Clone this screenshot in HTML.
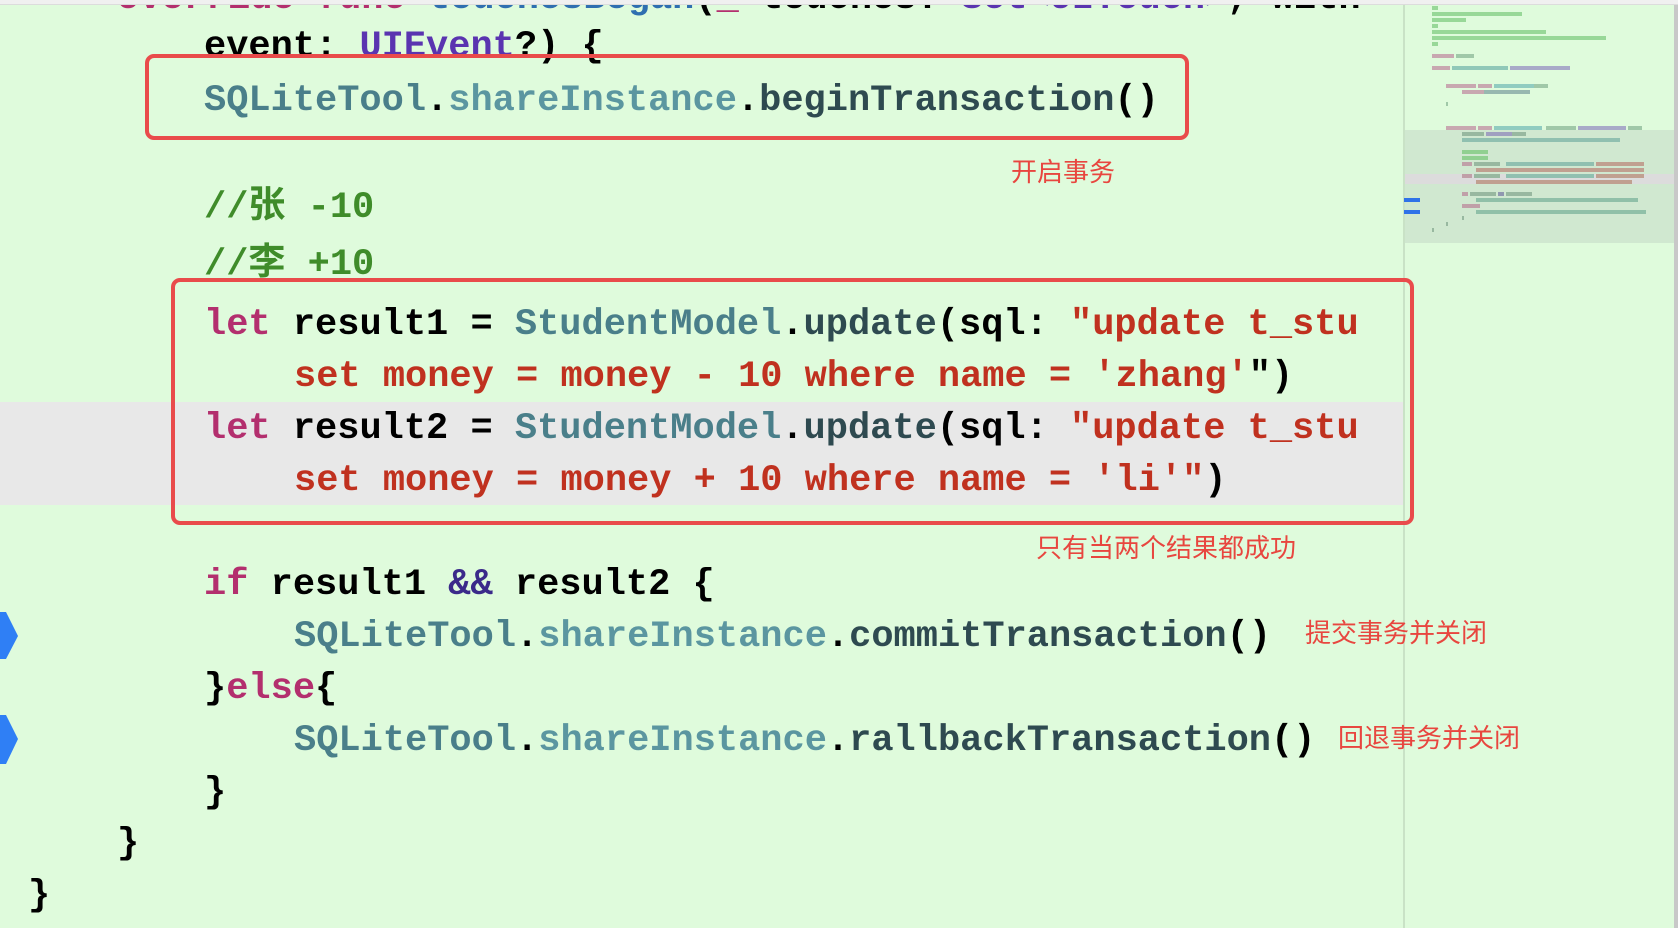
<!DOCTYPE html>
<html><head><meta charset="utf-8"><style>
*{margin:0;padding:0;box-sizing:border-box}
body{width:1678px;height:928px;overflow:hidden;background:#dffbdc;position:relative;font-family:"Liberation Mono","Noto Sans CJK SC",monospace;}
.l{position:absolute;height:52px;line-height:52px;font-size:37px;font-weight:bold;white-space:pre;color:#000}
.k{color:#b32f6e}.t{color:#4a7f8a}.m{color:#5b96a0}.f{color:#2e4a50}.s{color:#c0311f}.c{color:#3f8c2a}.p{color:#5a34b0}.o{color:#3b2a8a}.b{color:#2f6fb0}
.box{position:absolute;border:4px solid #e94b4b;border-radius:9px}
.a{position:absolute;font-family:"Liberation Sans","Noto Sans CJK SC",sans-serif;font-size:26px;color:#e8463f;line-height:30px;white-space:nowrap}
.mm{position:absolute;height:4px}
</style></head><body>
<div style="position:absolute;left:0;top:0;width:1678px;height:5px;background:#f0f0f0;border-bottom:1px solid #dcdcdc;z-index:3"></div>
<div style="position:absolute;left:0;top:402px;width:1403px;height:103px;background:#e8e8e8"></div>
<div style="position:absolute;left:1403px;top:0;width:2px;height:928px;background:#c9e2c6"></div>
<div style="position:absolute;left:1674px;top:0;width:4px;height:928px;background:#c8c8c8"></div>

<div class="l" style="left:117px;top:-27px"><span class="k">override</span> <span class="k">func</span> <span class="b">touchesBegan</span>(<span class="k">_</span> touches: <span class="p">Set&lt;UITouch&gt;</span>, with</div>
<div class="l" style="left:204px;top:21px">event: <span class="p">UIEvent</span>?) {</div>
<div class="l" style="left:204px;top:75px"><span class="t">SQLiteTool</span>.<span class="m">shareInstance</span>.<span class="f">beginTransaction</span>()</div>
<div class="l c" style="left:204px;top:182px">//张 -10</div>
<div class="l c" style="left:204px;top:239px">//李 +10</div>
<div class="l" style="left:204px;top:299px"><span class="k">let</span> result1 = <span class="t">StudentModel</span>.<span class="f">update</span>(sql: <span class="s">"update t_stu</span></div>
<div class="l s" style="left:294px;top:351px">set money = money - 10 where name = 'zhang'<span style="color:#000">"</span><span style="color:#000">)</span></div>
<div class="l" style="left:204px;top:403px"><span class="k">let</span> result2 = <span class="t">StudentModel</span>.<span class="f">update</span>(sql: <span class="s">"update t_stu</span></div>
<div class="l s" style="left:294px;top:455px">set money = money + 10 where name = 'li'"<span style="color:#000">)</span></div>
<div class="l" style="left:204px;top:559px"><span class="k">if</span> result1 <span class="o">&amp;&amp;</span> result2 {</div>
<div class="l" style="left:294px;top:611px"><span class="t">SQLiteTool</span>.<span class="m">shareInstance</span>.<span class="f">commitTransaction</span>()</div>
<div class="l" style="left:204px;top:663px">}<span class="k">else</span>{</div>
<div class="l" style="left:294px;top:715px"><span class="t">SQLiteTool</span>.<span class="m">shareInstance</span>.<span class="f">rallbackTransaction</span>()</div>
<div class="l" style="left:204px;top:767px">}</div>
<div class="l" style="left:117px;top:818px">}</div>
<div class="l" style="left:28px;top:870px">}</div>

<div class="box" style="left:145px;top:54px;width:1044px;height:86px"></div>
<div class="box" style="left:171px;top:278px;width:1243px;height:247px"></div>

<div class="a" style="left:1011px;top:157px">开启事务</div>
<div class="a" style="left:1036px;top:533px">只有当两个结果都成功</div>
<div class="a" style="left:1305px;top:618px">提交事务并关闭</div>
<div class="a" style="left:1338px;top:723px">回退事务并关闭</div>

<svg style="position:absolute;left:0;top:0" width="20" height="928"><polygon points="0,612 6,612 18,636 6,659 0,659" fill="#2f7ff5"/><polygon points="0,715 6,715 18,739 6,764 0,764" fill="#2f7ff5"/></svg>

<div style="position:absolute;left:1405px;top:130px;width:269px;height:113px;background:#d0e8d0"></div>
<div style="position:absolute;left:1405px;top:174px;width:269px;height:10px;background:#dcdcdc"></div>
<div class="mm" style="left:1432px;top:6px;width:6px;background:#98d898"></div>
<div class="mm" style="left:1432px;top:12px;width:90px;background:#98d898"></div>
<div class="mm" style="left:1432px;top:18px;width:34px;background:#98d898"></div>
<div class="mm" style="left:1432px;top:24px;width:6px;background:#98d898"></div>
<div class="mm" style="left:1432px;top:30px;width:114px;background:#98d898"></div>
<div class="mm" style="left:1432px;top:36px;width:174px;background:#98d898"></div>
<div class="mm" style="left:1432px;top:42px;width:6px;background:#98d898"></div>
<div class="mm" style="left:1432px;top:54px;width:22px;background:#c8a8b0"></div>
<div class="mm" style="left:1456px;top:54px;width:18px;background:#a0c8a8"></div>
<div class="mm" style="left:1432px;top:66px;width:18px;background:#c8a8b0"></div>
<div class="mm" style="left:1452px;top:66px;width:56px;background:#90c8b8"></div>
<div class="mm" style="left:1510px;top:66px;width:60px;background:#a8aac8"></div>
<div class="mm" style="left:1446px;top:84px;width:30px;background:#c8a8b0"></div>
<div class="mm" style="left:1478px;top:84px;width:14px;background:#c8a8b0"></div>
<div class="mm" style="left:1494px;top:84px;width:40px;background:#90ccc0"></div>
<div class="mm" style="left:1534px;top:84px;width:14px;background:#a0c8a8"></div>
<div class="mm" style="left:1462px;top:90px;width:22px;background:#c8a8b0"></div>
<div class="mm" style="left:1484px;top:90px;width:46px;background:#98b8b0"></div>
<div class="mm" style="left:1446px;top:102px;width:2px;background:#a0c8a8"></div>
<div class="mm" style="left:1446px;top:126px;width:30px;background:#c8a8b0"></div>
<div class="mm" style="left:1478px;top:126px;width:14px;background:#c8a8b0"></div>
<div class="mm" style="left:1494px;top:126px;width:48px;background:#90ccc0"></div>
<div class="mm" style="left:1546px;top:126px;width:30px;background:#a0c8a8"></div>
<div class="mm" style="left:1578px;top:126px;width:48px;background:#a8aac8"></div>
<div class="mm" style="left:1628px;top:126px;width:14px;background:#a0c8a8"></div>
<div class="mm" style="left:1462px;top:132px;width:22px;background:#98b8a0"></div>
<div class="mm" style="left:1486px;top:132px;width:26px;background:#a0a0c0"></div>
<div class="mm" style="left:1512px;top:132px;width:14px;background:#98b8a0"></div>
<div class="mm" style="left:1462px;top:138px;width:158px;background:#90c0b0"></div>
<div class="mm" style="left:1462px;top:150px;width:26px;background:#90d090"></div>
<div class="mm" style="left:1462px;top:156px;width:26px;background:#90d090"></div>
<div class="mm" style="left:1462px;top:162px;width:10px;background:#c0a0a8"></div>
<div class="mm" style="left:1474px;top:162px;width:26px;background:#98b8a0"></div>
<div class="mm" style="left:1506px;top:162px;width:88px;background:#90c0b0"></div>
<div class="mm" style="left:1596px;top:162px;width:48px;background:#c0a090"></div>
<div class="mm" style="left:1476px;top:168px;width:168px;background:#c0a090"></div>
<div class="mm" style="left:1462px;top:174px;width:10px;background:#c0a0a8"></div>
<div class="mm" style="left:1474px;top:174px;width:26px;background:#98b8a0"></div>
<div class="mm" style="left:1506px;top:174px;width:88px;background:#90c0b0"></div>
<div class="mm" style="left:1596px;top:174px;width:48px;background:#c0a090"></div>
<div class="mm" style="left:1476px;top:180px;width:156px;background:#c0a090"></div>
<div class="mm" style="left:1462px;top:192px;width:6px;background:#c0a0a8"></div>
<div class="mm" style="left:1470px;top:192px;width:26px;background:#98b8a0"></div>
<div class="mm" style="left:1498px;top:192px;width:6px;background:#9098b0"></div>
<div class="mm" style="left:1506px;top:192px;width:26px;background:#98b8a0"></div>
<div class="mm" style="left:1404px;top:198px;width:16px;background:#2f72e8"></div>
<div class="mm" style="left:1404px;top:210px;width:16px;background:#2f72e8"></div>
<div class="mm" style="left:1476px;top:198px;width:162px;background:#90c0a8"></div>
<div class="mm" style="left:1462px;top:204px;width:18px;background:#c0a0a8"></div>
<div class="mm" style="left:1476px;top:210px;width:170px;background:#90c0a8"></div>
<div class="mm" style="left:1462px;top:216px;width:2px;background:#98b8a0"></div>
<div class="mm" style="left:1446px;top:222px;width:2px;background:#98b8a0"></div>
<div class="mm" style="left:1432px;top:228px;width:2px;background:#98b8a0"></div>
</body></html>
